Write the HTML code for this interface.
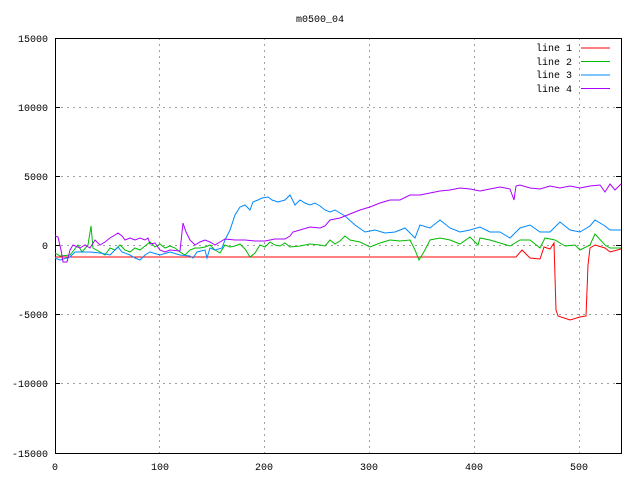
<!DOCTYPE html><html><head><style>body{margin:0;background:#fff}svg{display:block}text{font-family:"Liberation Mono","DejaVu Sans Mono",monospace;font-size:10px;fill:#000}</style></head><body>
<svg width="640" height="480" xmlns="http://www.w3.org/2000/svg">
<g stroke="#a0a0a0" stroke-dasharray="2,4" stroke-width="1">
<line x1="55" y1="107.5" x2="621" y2="107.5"/><line x1="55" y1="176.5" x2="621" y2="176.5"/><line x1="55" y1="245.5" x2="621" y2="245.5"/><line x1="55" y1="314.5" x2="621" y2="314.5"/><line x1="55" y1="383.5" x2="621" y2="383.5"/>
<line x1="159.5" y1="38" x2="159.5" y2="453"/><line x1="264.5" y1="38" x2="264.5" y2="453"/><line x1="369.5" y1="38" x2="369.5" y2="453"/><line x1="474.5" y1="38" x2="474.5" y2="453"/><line x1="579.5" y1="38" x2="579.5" y2="453"/>
</g>
<rect x="55.5" y="38.5" width="566" height="415" fill="none" stroke="#000"/>
<g stroke="#000"><line x1="55" y1="107.5" x2="60" y2="107.5"/><line x1="55" y1="176.5" x2="60" y2="176.5"/><line x1="55" y1="245.5" x2="60" y2="245.5"/><line x1="55" y1="314.5" x2="60" y2="314.5"/><line x1="55" y1="383.5" x2="60" y2="383.5"/>
<line x1="616" y1="107.5" x2="621" y2="107.5"/><line x1="616" y1="176.5" x2="621" y2="176.5"/><line x1="616" y1="245.5" x2="621" y2="245.5"/><line x1="616" y1="314.5" x2="621" y2="314.5"/><line x1="616" y1="383.5" x2="621" y2="383.5"/></g>
<text x="320" y="22" text-anchor="middle">m0500_04</text>
<g text-anchor="end"><text x="48" y="42">15000</text><text x="48" y="111">10000</text><text x="48" y="180">5000</text><text x="48" y="249">0</text><text x="48" y="318">-5000</text><text x="48" y="387">-10000</text><text x="48" y="457">-15000</text></g>
<g text-anchor="middle"><text x="55" y="470">0</text><text x="160" y="470">100</text><text x="264" y="470">200</text><text x="369" y="470">300</text><text x="474" y="470">400</text><text x="579" y="470">500</text></g>
<g text-anchor="end"><text x="572" y="51">line 1</text><text x="572" y="65">line 2</text><text x="572" y="78">line 3</text><text x="572" y="92">line 4</text></g>
<line x1="581" y1="48" x2="610" y2="48" stroke="#f00"/><line x1="581" y1="61.5" x2="610" y2="61.5" stroke="#0b0"/><line x1="581" y1="75" x2="610" y2="75" stroke="#08f"/><line x1="581" y1="88.5" x2="610" y2="88.5" stroke="#a0f"/>
<g fill="none" stroke-width="1">
<polyline stroke="#f00" points="55,257 516,257 522,250 530,258 540,259 544,247 550,249 554,243 556,310 558,316 570,320 580,317 586,316 588,265 590,248 595,245 605,248 610,252 621,249"/>
<polyline stroke="#0b0" points="55,253 60,256 70,255 74,250 78,245 82,252 88,245 91,226 93,248 100,252 105,255 110,248 115,250 120,245 125,250 130,252 135,248 140,250 145,246 150,242 155,247 160,244 165,248 170,246 175,248 180,252 185,255 190,250 195,248 200,248 205,247 210,245 215,250 220,253 225,245 230,247 235,246 240,244 245,249 250,257 255,253 260,245 265,247 270,242 275,245 280,246 285,243 290,247 300,246 310,244 320,245 325,246 330,240 335,244 340,241 345,236 350,240 360,242 370,247 380,243 390,240 400,241 410,240 415,250 419,260 425,250 430,240 440,238 450,240 460,244 470,237 478,245 480,238 490,240 500,243 510,246 520,240 530,240 540,248 545,238 555,240 565,246 575,245 580,250 590,245 595,234 605,245 610,248 621,248"/>
<polyline stroke="#08f" points="55,258 60,260 70,257 75,252 80,252 90,252 100,253 110,255 115,250 118,247 122,252 130,255 135,258 140,260 145,255 150,252 160,255 170,252 180,255 190,256 193,258 197,252 205,250 207,258 210,248 215,250 222,248 225,240 230,230 235,215 240,207 245,205 250,210 253,202 258,200 262,198 268,197 272,200 278,202 285,200 290,195 295,205 300,200 305,203 310,205 315,203 320,206 325,210 330,212 335,210 340,213 345,216 355,225 365,232 375,230 385,233 395,232 405,228 415,238 420,225 430,228 440,220 450,228 460,232 470,230 480,227 490,232 500,232 510,238 520,228 530,225 540,232 550,232 560,222 570,230 580,232 590,226 595,220 605,226 610,230 621,230"/>
<polyline stroke="#a0f" points="55,236 58,237 61,250 63,262 67,262 70,250 73,245 80,248 85,245 90,248 95,240 100,245 105,242 110,238 115,235 118,233 122,236 125,240 130,238 135,240 140,238 145,240 148,238 150,244 155,243 160,250 165,252 170,250 180,251 183,223 186,232 190,240 195,245 200,242 205,240 210,242 215,245 220,242 225,239 235,240 245,240 255,241 265,241 275,239 285,239 290,236 293,232 300,230 310,227 320,228 325,226 330,220 340,218 350,214 360,210 370,207 380,203 390,200 400,200 410,195 420,195 430,193 440,191 450,190 460,188 470,189 480,191 490,189 500,187 510,189 514,200 516,186 520,185 530,188 540,189 550,186 560,188 570,186 580,188 590,186 600,185 605,192 610,184 615,190 621,184"/>
</g>
</svg></body></html>
